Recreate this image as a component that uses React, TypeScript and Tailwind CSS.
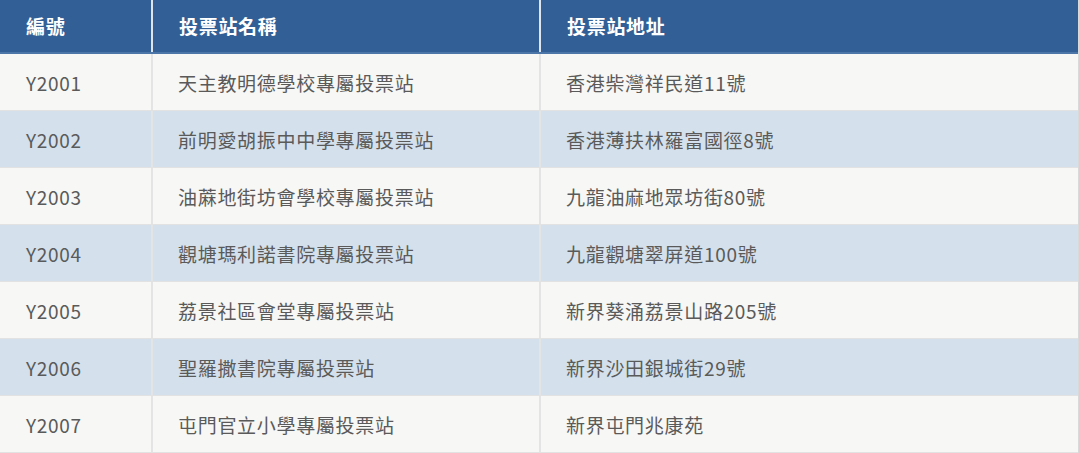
const rows = [
  { id: "Y2001", name: "天主教明德學校專屬投票站", addr: "香港柴灣祥民道11號" },
  { id: "Y2002", name: "前明愛胡振中中學專屬投票站", addr: "香港薄扶林羅富國徑8號" },
  { id: "Y2003", name: "油蔴地街坊會學校專屬投票站", addr: "九龍油麻地眾坊街80號" },
  { id: "Y2004", name: "觀塘瑪利諾書院專屬投票站", addr: "九龍觀塘翠屏道100號" },
  { id: "Y2005", name: "荔景社區會堂專屬投票站", addr: "新界葵涌荔景山路205號" },
  { id: "Y2006", name: "聖羅撒書院專屬投票站", addr: "新界沙田銀城街29號" },
  { id: "Y2007", name: "屯門官立小學專屬投票站", addr: "新界屯門兆康苑" },
]

const font = { fontFamily: '"Noto Sans CJK TC", "Noto Sans", sans-serif' }

export default function App() {
  return (
    <div
      className="w-[1079px] h-[453px] overflow-hidden bg-white text-[19px] tracking-[0.7px]"
      style={font}
    >
      <div className="border-r border-[#d9d9d9]">
        {/* header */}
        <div className="grid grid-cols-[151px_388px_1fr] h-[54px] bg-[#315f96] border-b-2 border-[#4d76a8] text-white font-bold">
          <div className="flex items-center pl-[26px]">編號</div>
          <div className="flex items-center pl-[26px] border-l-2 border-[#dde5ee]">投票站名稱</div>
          <div className="flex items-center pl-[26px] border-l-2 border-[#dde5ee]">投票站地址</div>
        </div>

        {rows.map((r, i) => (
          <div
            key={r.id}
            className={
              "grid grid-cols-[151px_388px_1fr] h-[57px] border-b border-[#e2e2e2] text-[#5a5a5a] " +
              (i % 2 === 1 ? "bg-[#d4e1ec]" : "bg-[#f7f7f5]")
            }
          >
            <div className="flex items-center pl-[26px] pt-[2px]">{r.id}</div>
            <div className="flex items-center pl-[25px] pt-[2px] border-l-2 border-[#e4e4e4]">{r.name}</div>
            <div className="flex items-center pl-[25px] pt-[2px] border-l-2 border-[#e4e4e4]">{r.addr}</div>
          </div>
        ))}
      </div>
    </div>
  )
}
